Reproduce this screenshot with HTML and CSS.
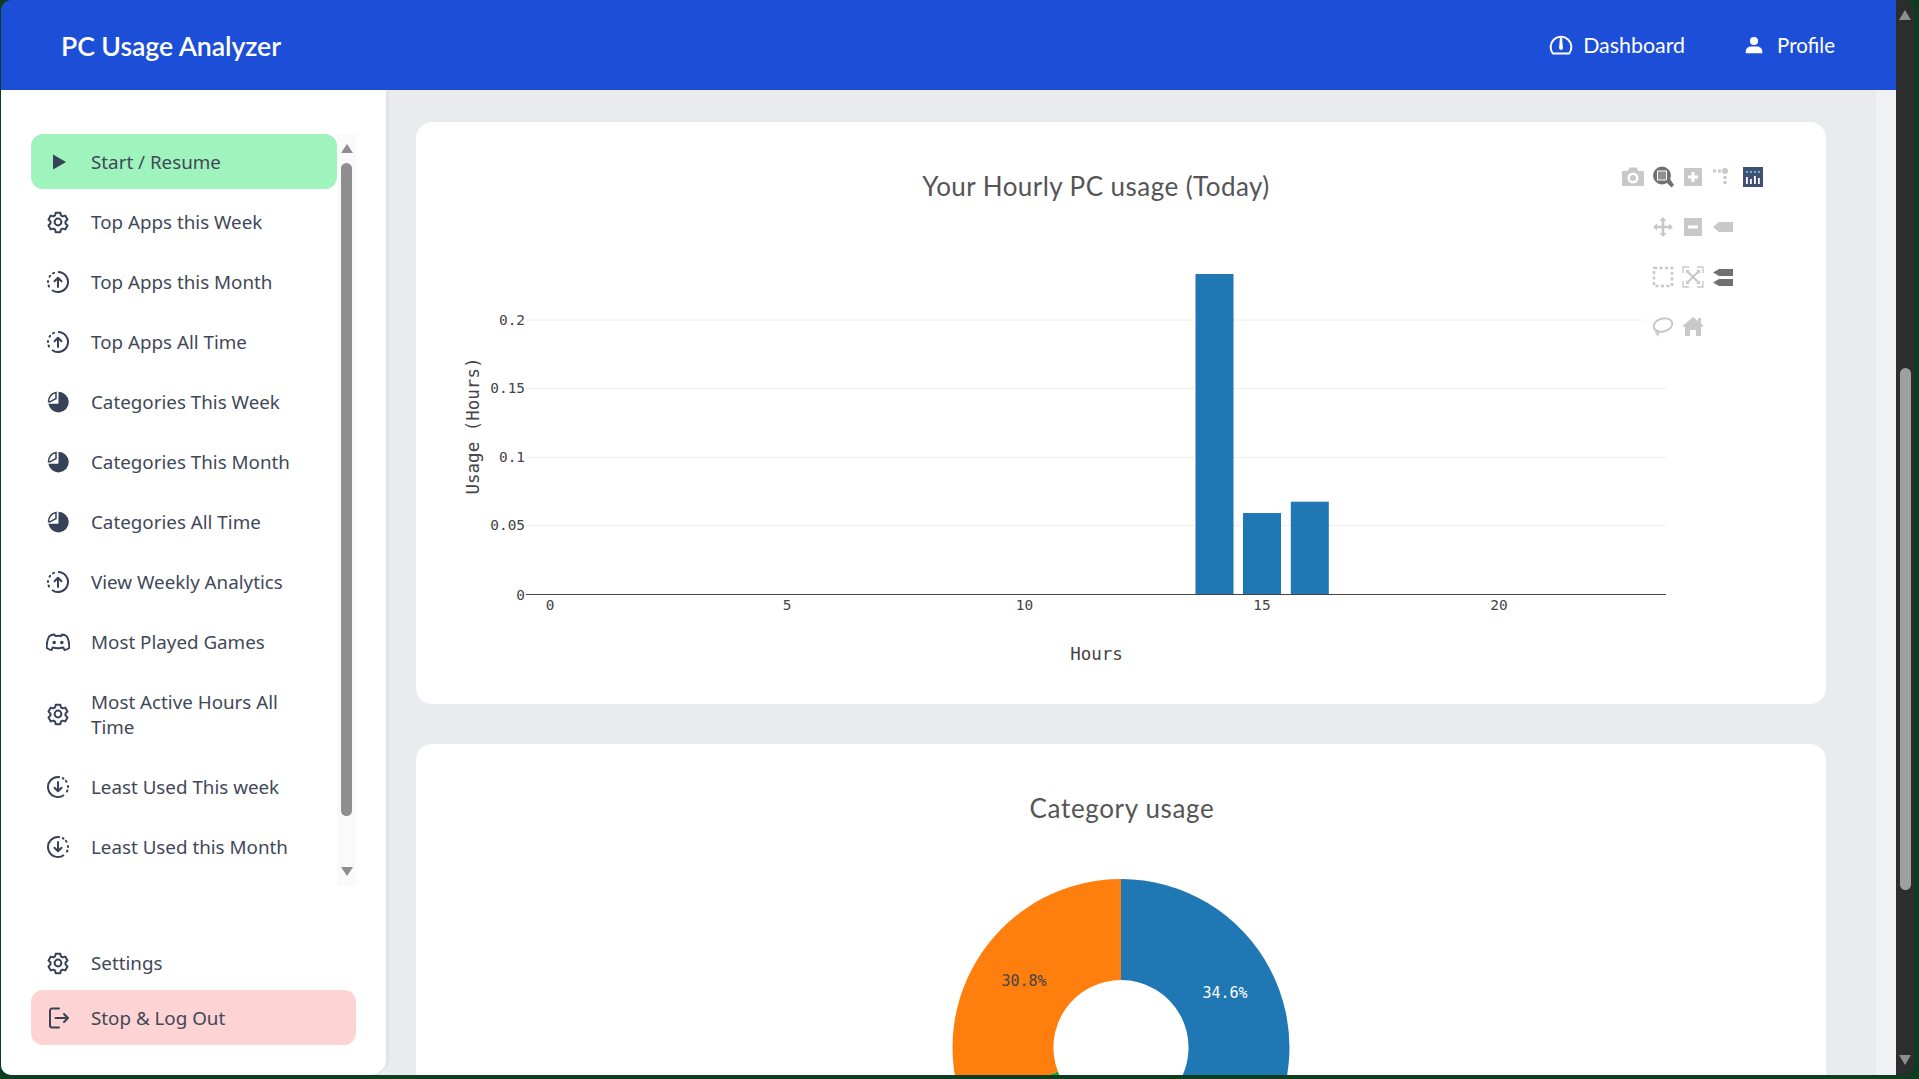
FILE: index.html
```html
<!DOCTYPE html>
<html lang="en">
<head>
<meta charset="utf-8">
<title>PC Usage Analyzer</title>
<link rel="stylesheet" href="styles.css">
</head>
<body>
<svg class="sprite" width="0" height="0" aria-hidden="true">
  <symbol id="i-play" viewBox="0 0 24 24"><path d="M7 4.500 20 12 7 19.500z" fill="currentColor"/></symbol>
  <symbol id="i-gear" viewBox="0 0 24 24"><g fill="none" stroke="currentColor" stroke-width="2" stroke-linejoin="round"><path d="M9.700 2.800h4.600l.6 2.600 1.700 1 2.600-.8 2.300 4-2 1.800v2.200l2 1.800-2.300 4-2.600-.8-1.700 1-.6 2.600H9.700l-.6-2.600-1.700-1-2.600.8-2.300-4 2-1.800v-2.200l-2-1.800 2.300-4 2.600.8 1.700-1z"/><circle cx="12" cy="12" r="3.400"/></g></symbol>
  <symbol id="i-up" viewBox="0 0 24 24"><g fill="none" stroke="currentColor" stroke-width="2"><path d="M12 2a10 10 0 1 1-6 18" /><path d="M3.100 16.500 2.600 15.500M2 12v-1M3.500 6.800 4.200 5.800M7 3.300 8 2.800" stroke-linecap="round"/><path d="M12 17V8M8.500 11.300 12 7.800l3.500 3.500" stroke-linecap="round" stroke-linejoin="round"/></g></symbol>
  <symbol id="i-down" viewBox="0 0 24 24"><g fill="none" stroke="currentColor" stroke-width="2"><path d="M14 2.200a10 10 0 1 0 4 17.800"/><path d="M20.900 16.500 21.400 15.500M22 12v-1M20.500 6.800 19.800 5.800M17.500 3.600 16.800 3.100" stroke-linecap="round"/><path d="M12 7v9M8.500 12.700 12 16.200l3.500-3.500" stroke-linecap="round" stroke-linejoin="round"/></g></symbol>
  <symbol id="i-pie" viewBox="0 0 24 24"><path d="M12.500 1.800a10.300 10.300 0 1 1-10.200 12h9.200a1 1 0 0 0 1-1z" fill="currentColor"/><path d="M10 2.500v6L4 11.800H2.500C2.700 7 5.700 3.500 10 2.500z" fill="none" stroke="currentColor" stroke-width="1.500"/></symbol>
  <symbol id="i-discord" viewBox="0 0 24 24"><path d="M8 4.500c-1.700.2-3.300.8-4.800 1.700C1.400 9.800.4 14 .8 18c1.300 1 2.900 1.700 4.600 2.100l1.300-2.600c3.600 1 7 1 10.600 0l1.300 2.600c1.700-.4 3.300-1.100 4.600-2.100.4-4-.6-8.200-2.400-11.800-1.500-.9-3.100-1.500-4.800-1.700l-.7 1.500c-2-.3-3.600-.3-5.600 0z" fill="none" stroke="currentColor" stroke-width="1.900" stroke-linejoin="round"/><circle cx="8.200" cy="12.500" r="1.800" fill="currentColor"/><circle cx="15.800" cy="12.500" r="1.800" fill="currentColor"/></symbol>
  <symbol id="i-logout" viewBox="0 0 24 24"><g fill="none" stroke="currentColor" stroke-width="2" stroke-linecap="round" stroke-linejoin="round"><path d="M13 2.500H6a2 2 0 0 0-2 2v15a2 2 0 0 0 2 2h7"/><path d="M9.500 12h12.500M18 8l4 4-4 4"/></g></symbol>
  <symbol id="i-dash" viewBox="0 0 24 24"><g fill="none" stroke="currentColor" stroke-width="2" stroke-linejoin="round"><path d="M3.800 20.500A10.400 10.400 0 1 1 20.200 20.500z"/></g><path d="M10.900 5h2.200l.8 10a1.900 1.900 0 1 1-3.800 0z" fill="currentColor"/></symbol>
  <symbol id="i-user" viewBox="0 0 24 24"><circle cx="12" cy="6.700" r="5.400" fill="currentColor"/><path d="M1 23v-2.500c0-4 3.500-6.500 7-6.500h8c3.500 0 7 2.500 7 6.500V23z" fill="currentColor"/></symbol>
</svg>

<div class="window">
  <div class="app">
    <header class="topbar">
      <div class="brand">PC Usage Analyzer</div>
      <nav class="topnav">
        <a class="topnav-link topnav-link-dash"><svg class="topnav-icon"><use href="#i-dash"/></svg>Dashboard</a>
        <a class="topnav-link"><svg class="topnav-icon topnav-icon-user"><use href="#i-user"/></svg>Profile</a>
      </nav>
    </header>
    <div class="body-row">
      <aside class="sidebar">
        <div class="menu-wrap">
          <ul class="menu">
            <li class="menu-item menu-item-start"><svg class="menu-icon"><use href="#i-play"/></svg>Start / Resume</li>
            <li class="menu-item"><svg class="menu-icon"><use href="#i-gear"/></svg>Top Apps this Week</li>
            <li class="menu-item"><svg class="menu-icon"><use href="#i-up"/></svg>Top Apps this Month</li>
            <li class="menu-item"><svg class="menu-icon"><use href="#i-up"/></svg>Top Apps All Time</li>
            <li class="menu-item"><svg class="menu-icon"><use href="#i-pie"/></svg>Categories This Week</li>
            <li class="menu-item"><svg class="menu-icon"><use href="#i-pie"/></svg>Categories This Month</li>
            <li class="menu-item"><svg class="menu-icon"><use href="#i-pie"/></svg>Categories All Time</li>
            <li class="menu-item"><svg class="menu-icon"><use href="#i-up"/></svg>View Weekly Analytics</li>
            <li class="menu-item"><svg class="menu-icon"><use href="#i-discord"/></svg>Most Played Games</li>
            <li class="menu-item"><svg class="menu-icon"><use href="#i-gear"/></svg><span class="menu-text">Most Active Hours All Time</span></li>
            <li class="menu-item"><svg class="menu-icon"><use href="#i-down"/></svg>Least Used This week</li>
            <li class="menu-item"><svg class="menu-icon"><use href="#i-down"/></svg>Least Used this Month</li>
          </ul>
          <div class="mini-scroll">
            <span class="arrow-up arrow-small"></span>
            <span class="mini-thumb"></span>
            <span class="arrow-down arrow-small"></span>
          </div>
        </div>
        <ul class="menu menu-bottom">
          <li class="menu-item"><svg class="menu-icon"><use href="#i-gear"/></svg>Settings</li>
          <li class="menu-item menu-item-stop"><svg class="menu-icon"><use href="#i-logout"/></svg>Stop &amp; Log Out</li>
        </ul>
      </aside>
      <main class="content">
        <section class="card card-first">
          <svg class="chart" viewBox="416 122 1410 582" width="1410" height="582">
            <text class="chart-title" x="1096" y="196" text-anchor="middle">Your Hourly PC usage (Today)</text>
            <g class="grid">
              <line x1="526" x2="1666" y1="320" y2="320"/>
              <line x1="526" x2="1666" y1="388.500" y2="388.500"/>
              <line x1="526" x2="1666" y1="457.500" y2="457.500"/>
              <line x1="526" x2="1666" y1="525.500" y2="525.500"/>
            </g>
            <g class="bars">
              <rect x="1195.500" y="274" width="38" height="320"/>
              <rect x="1243" y="513" width="38" height="81"/>
              <rect x="1290.800" y="501.700" width="38" height="92.300"/>
            </g>
            <line class="axis" x1="526" x2="1666" y1="594.500" y2="594.500"/>
            <g class="tick" text-anchor="end">
              <text x="525" y="325">0.2</text>
              <text x="525" y="393">0.15</text>
              <text x="525" y="462">0.1</text>
              <text x="525" y="530">0.05</text>
              <text x="525" y="600">0</text>
            </g>
            <g class="tick" text-anchor="middle">
              <text x="550" y="610">0</text>
              <text x="787" y="610">5</text>
              <text x="1024.500" y="610">10</text>
              <text x="1262" y="610">15</text>
              <text x="1499" y="610">20</text>
            </g>
            <text class="axis-title" x="1096.500" y="660" text-anchor="middle">Hours</text>
            <text class="axis-title" transform="translate(479 426) rotate(-90)" text-anchor="middle">Usage (Hours)</text>

            <rect class="modebar-bg" x="1643" y="308" width="125" height="34"/>
            <g class="mb">
              <g transform="translate(1633 177)"><path d="M-10-6h4.500l2-3.500h7l2 3.500H10a1 1 0 0 1 1 1V8a1 1 0 0 1-1 1h-20a1 1 0 0 1-1-1V-5a1 1 0 0 1 1-1z"/><circle class="mb-hole" cy="1" r="5.500"/><circle cy="1" r="3"/></g>
              <g transform="translate(1663 177)"><path class="mb-active" d="M-1-10.500a9 9 0 1 0 0 18a9 9 0 0 0 0-18zm-5 4h10v10h-10z" fill-rule="evenodd"/><rect class="mb-mid" x="-5" y="-5.500" width="8" height="8"/><path class="mb-active" d="M5-1 11 8l-2.500 2.500L3 5z"/></g>
              <g transform="translate(1693 177)"><path d="M-9-9H9V9H-9zM-1.500-5v3.500H-5v3h3.500V5h3V1.500H5v-3H1.500V-5z" fill-rule="evenodd"/></g>
              <g transform="translate(1725 171)"><circle r="3"/><rect x="-12" y="-1.500" width="3" height="3"/><rect x="-7" y="-1.500" width="3" height="3"/><rect x="-1.500" y="5" width="3" height="3"/><rect x="-1.500" y="10" width="3" height="3"/></g>
              <g transform="translate(1663 227)"><path d="M0-10l3.500 4H1.300v4.700H6V-3.500l4 3.500-4 3.500V1.300H1.300V6H3.500L0 10l-3.500-4h2.200V1.300H-6V3.500l-4-3.500 4-3.500v2.200h4.700V-6h-2.200z"/></g>
              <g transform="translate(1693 227)"><path d="M-9-9H9V9H-9zM-5-1.500v3H5v-3z" fill-rule="evenodd"/></g>
              <path d="M1713 227l6-5h14v10h-14z"/>
              <path class="mb-dash" d="M1654 268h18v18h-18z"/>
              <g transform="translate(1693 277)"><path class="mb-line" d="M-4-10h-6v6M4-10h6v6M-4 10h-6V4M4 10h6V4"/><path class="mb-thick" d="M-5-5 5 5M5-5-5 5"/><path d="M-7-7h4l-4 4zM7-7H3l4 4zM-7 7h4l-4-4zM7 7H3l4-4z"/></g>
              <path class="mb-active" d="M1713 272.500l6-3.500h14v7h-14zM1713 282.500l6-3.500h14v7h-14z"/>
              <g transform="translate(1663 325)"><ellipse class="mb-loop" rx="9.500" ry="6.500" transform="rotate(-15)"/><path class="mb-thin" d="M-5 5c-2 1-3 3-1 3.500s3-1 1.500-2.500-2.500 2-.5 5"/></g>
              <path d="M1693 317l5 4v-3h3v5.500l3 3h-3V336h-5v-6h-6v6H1685v-9.500h-3z"/>
              <g><rect class="mb-logo" x="1743" y="167" width="20" height="20"/><g class="mb-logo-bars"><rect x="1746" y="177" width="1.800" height="7"/><rect x="1750" y="179" width="1.800" height="5"/><rect x="1754" y="176" width="1.800" height="8"/><rect x="1758" y="178" width="1.800" height="6"/></g><g class="mb-logo-dots"><rect x="1746" y="171" width="1.800" height="1.800"/><rect x="1750" y="171" width="1.800" height="1.800"/><rect x="1754" y="171" width="1.800" height="1.800"/><rect x="1758" y="171" width="1.800" height="1.800"/></g></g>
            </g>
          </svg>
        </section>
        <section class="card">
          <svg class="chart" viewBox="416 744 1410 582" width="1410" height="582">
            <text class="chart-title chart-title-small" x="1122" y="818" text-anchor="middle">Category usage</text>
            <g transform="translate(1121 1047.500)">
              <path class="slice-blue" d="M0-168.500A168.500 168.500 0 0 1 138.700 95.600L55.600 38.300A67.500 67.500 0 0 0 0-67.500z"/>
              <path class="slice-green" d="M138.700 95.600A168.500 168.500 0 0 1-157.400 60.100L-63.100 24.100A67.500 67.500 0 0 0 55.600 38.300z"/>
              <path class="slice-orange" d="M-157.400 60.100A168.500 168.500 0 0 1 0-168.500V-67.500A67.500 67.500 0 0 0-63.100 24.100z"/>
            </g>
            <text class="pie-label pie-label-dark" x="1024" y="986" text-anchor="middle">30.8%</text>
            <text class="pie-label pie-label-light" x="1225" y="998" text-anchor="middle">34.6%</text>
          </svg>
        </section>
      </main>
      <div class="stripe"></div>
    </div>
  </div>
  <div class="page-scroll">
    <span class="arrow-up arrow-page-top"></span>
    <span class="page-thumb"></span>
    <span class="arrow-down arrow-page-bottom"></span>
  </div>
</div>
</body>
</html>
```
FILE: styles.css
```css
* { box-sizing: border-box; }
html, body { margin: 0; height: 100%; overflow: hidden; }
body { background: #0c3d1e; font-family: "Noto Sans", sans-serif; }
.sprite { position: absolute; }

.window {
  display: flex;
  width: 1913px;
  height: 1075px;
  margin-left: 1px;
  border-radius: 10px;
  overflow: hidden;
}
.app { flex: 1; min-width: 0; display: flex; flex-direction: column; }

.topbar {
  flex: none;
  height: 90px;
  background: #1d4ed8;
  color: #fff;
  display: flex;
  align-items: center;
  justify-content: space-between;
  padding: 0 61px 0 60px;
}
.brand { font: 600 26.700px "Lato", sans-serif; letter-spacing: -0.1px; padding-top: 2px; }
.topnav { display: flex; gap: 60px; }
.topnav-link { display: flex; align-items: center; font: 400 20.500px "Lato", sans-serif; }
.topnav-link-dash { font-size: 21.400px; }
.topnav-icon { width: 24px; height: 24px; margin-right: 10px; }
.topnav-icon-user { width: 18px; height: 18px; margin-right: 14px; }

.body-row { flex: 1; min-height: 0; display: flex; background: #f0f1f5; }

.sidebar {
  flex: none;
  width: 385px;
  background: #fff;
  border-radius: 0 0 16px 10px;
  padding: 44px 30px 30px;
  display: flex;
  flex-direction: column;
  justify-content: space-between;
  color: #3f4858;
  box-shadow: 1px 1px 4px rgba(0, 0, 0, .08);
  z-index: 1;
}
.menu-wrap { display: flex; height: 752px; }
.menu { list-style: none; margin: 0; padding: 0; flex: 1; min-width: 0; display: flex; flex-direction: column; gap: 5px; }
.menu-bottom { flex: none; gap: 0; }
.menu-item {
  display: flex;
  align-items: center;
  min-height: 55px;
  padding: 16px 17px 14px 15px;
  font-size: 18.800px;
  line-height: 25px;
  border-radius: 12px;
}
.menu-item-start { background: #9ff4bd; }
.menu-item-stop { background: #fdd3d3; }
.menu-icon { flex: none; width: 24px; height: 24px; margin-right: 21px; position: relative; top: -1px; color: #374157; }
.menu-text { display: block; }

.mini-scroll {
  flex: none;
  width: 19px;
  background: #fafafa;
  display: flex;
  flex-direction: column;
  align-items: center;
  padding: 10px 0 8px;
}
.mini-thumb { width: 11px; height: 653px; margin: 10px 0 51px; background: #8e8e8e; border-radius: 6px; }
.arrow-up, .arrow-down { display: block; width: 0; height: 0; border-left: 6.500px solid transparent; border-right: 6.500px solid transparent; }
.arrow-up { border-bottom: 9px solid #8e8e8e; }
.arrow-down { border-top: 9px solid #8e8e8e; }

.content {
  flex: none;
  width: 1490px;
  padding: 32px 50px 0 30px;
  background: #eaebef;
  overflow: hidden;
  display: flex;
  flex-direction: column;
  gap: 40px;
}
.stripe { flex: 1; }
.card { flex: none; width: 1410px; height: 582px; background: #fff; border-radius: 16px; }
.chart { display: block; }

.chart-title { font: 400 26px "Lato", sans-serif; letter-spacing: .45px; fill: #555; }
.chart-title-small { letter-spacing: .65px; }
.tick text { font: 14.400px "DejaVu Sans Mono", monospace; fill: #444; }
.axis-title { font: 17.500px "DejaVu Sans Mono", monospace; fill: #444; }
.grid line { stroke: #eeeeee; stroke-width: 1; }
.axis { stroke: #444; stroke-width: 1; }
.bars rect { fill: #1f77b4; }

.modebar-bg { fill: rgba(255, 255, 255, .7); }
.mb { fill: #c8c8c8; }
.mb-hole { fill: #fff; }
.mb-active { fill: #707070; }
.mb-mid { fill: #8f8f8f; }
.mb-dash { fill: none; stroke: #c8c8c8; stroke-width: 2.500; stroke-dasharray: 3 2.500; }
.mb-line { fill: none; stroke: #c8c8c8; stroke-width: 1.300; }
.mb-thick { fill: none; stroke: #c8c8c8; stroke-width: 2; }
.mb-loop { fill: none; stroke: #c8c8c8; stroke-width: 2; }
.mb-thin { fill: none; stroke: #c8c8c8; stroke-width: 1.500; }
.mb-logo { fill: #3f4f75; }
.mb-logo-bars rect { fill: #fff; }
.mb-logo-dots rect { fill: #6fd6c8; }

.slice-blue { fill: #1f77b4; }
.slice-orange { fill: #ff7f0e; }
.slice-green { fill: #2ca02c; }
.pie-label { font: 15px "DejaVu Sans Mono", monospace; }
.pie-label-dark { fill: #444; }
.pie-label-light { fill: #fff; }

.page-scroll {
  flex: none;
  width: 18px;
  background: #2d2d2d;
  display: flex;
  flex-direction: column;
  align-items: center;
  padding-top: 10px;
}
.page-thumb { width: 11px; height: 522px; margin-top: 348px; background: #9f9f9f; border-radius: 6px; }
.arrow-page-top { border-bottom-width: 10px; }
.arrow-page-bottom { margin-top: 165px; border-top-width: 10px; }
```
